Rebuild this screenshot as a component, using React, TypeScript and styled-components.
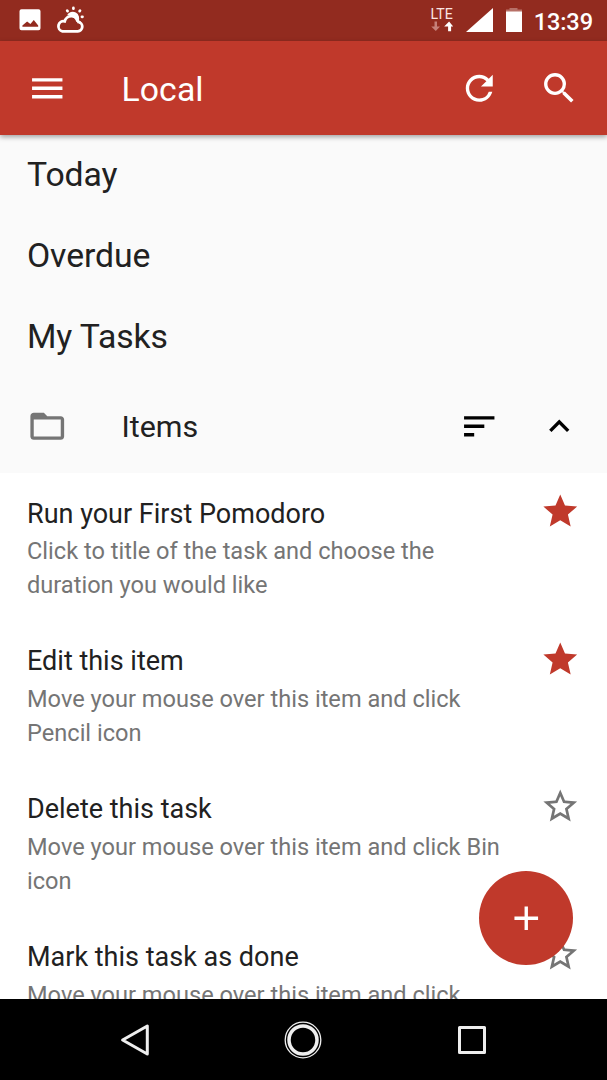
import React from 'react';
import styled, { createGlobalStyle } from 'styled-components';
import {
  MdAdd, MdExpandLess, MdFolderOpen, MdMenu, MdRefresh, MdSearch, MdSort, MdStar, MdStarBorder,
} from 'react-icons/md';

const RED = '#c0392b';
const INK = '#212121';
const GREY = '#757575';

const GlobalStyle = createGlobalStyle`
  *, *::before, *::after { box-sizing: border-box; }
  body { margin: 0; background: #000; font-family: Roboto, sans-serif; overflow: hidden; }
  h1, h2, h3, p, ul { margin: 0; padding: 0; font-weight: 400; list-style: none; }
  button { all: unset; box-sizing: border-box; }
  svg { display: block; flex: none; }
`;

const Screen = styled.div`
  position: relative;
  display: flex;
  flex-direction: column;
  width: 607px;
  height: 1080px;
  overflow: hidden;
  background: #fff;
`;

const StatusBar = styled.header`
  display: flex;
  align-items: center;
  justify-content: space-between;
  flex: none;
  height: 40.5px;
  padding: 0 14px 0 19px;
  background: #922b1f;
  color: #fff;
`;

const StatusGroup = styled.div<{ $gap: number }>`
  display: flex;
  align-items: center;
  gap: ${(p) => p.$gap}px;
`;

const Network = styled.div`
  display: flex;
  flex-direction: column;
  align-items: center;
  width: 25px;
  margin-top: -2px;
  font-size: 14.2px;
  line-height: 14px;
  color: #fbe5e2;
`;

const Clock = styled.time`
  font-size: 23.6px;
  font-weight: 500;
  line-height: 40px;
  padding-top: 3px;
  letter-spacing: -0.1px;
`;

const Toolbar = styled.div`
  z-index: 1;
  display: flex;
  align-items: center;
  flex: none;
  height: 94.5px;
  padding: 0.5px 27.5px 0 27px;
  background: ${RED};
  color: #fff;
  box-shadow: 0 2px 5px rgba(0, 0, 0, 0.36);
`;

const IconButton = styled.button<{ $ml?: number; $color?: string }>`
  display: flex;
  flex: none;
  width: 40.5px;
  height: 40.5px;
  margin-left: ${(p) => p.$ml ?? 0}px;
  color: ${(p) => p.$color ?? 'inherit'};
  svg { width: 100%; height: 100%; }
`;

const Title = styled.h1`
  flex: 1;
  margin: 4px 0 0 54px;
  font-size: 33.75px;
  line-height: 40px;
  letter-spacing: 0.1px;
`;

const Filters = styled.ul`
  flex: none;
  background: #fafafa;
  color: ${INK};
`;

const FilterRow = styled.li`
  height: 81px;
  padding-left: 27px;
  font-size: 33.75px;
  line-height: 80px;
  letter-spacing: -0.1px;
`;

const GroupRow = styled.div`
  display: flex;
  align-items: center;
  flex: none;
  height: 95px;
  padding: 2px 27.5px 0 27px;
  background: #fafafa;
  color: #000;
`;

const GroupName = styled.h2`
  flex: 1;
  margin-left: 54px;
  padding-top: 1px;
  color: ${INK};
  font-size: 30.4px;
  line-height: 40px;
`;

const TaskList = styled.ul`
  flex: 1;
  min-height: 0;
  overflow: hidden;
  background: #fff;
`;

const TaskRow = styled.li`
  display: flex;
  align-items: flex-start;
  height: 147.7px;
  padding: 18px 27px 0;
`;

const TaskText = styled.div`
  width: 486px;
  flex: none;
`;

const TaskTitle = styled.h3`
  padding-top: 5.7px;
  font-size: 27px;
  line-height: 34px;
  color: ${INK};
`;

const TaskNote = styled.p`
  margin-top: 4.8px;
  font-size: 23.6px;
  line-height: 33.75px;
  color: ${GREY};
`;

const Fab = styled.button`
  position: absolute;
  left: 478.8px;
  top: 870.5px;
  z-index: 2;
  display: flex;
  align-items: center;
  justify-content: center;
  width: 94.5px;
  height: 94.5px;
  border-radius: 50%;
  background: ${RED};
  color: #fff;
`;

const NavBar = styled.nav`
  display: grid;
  grid-template-columns: repeat(3, 168.5px);
  justify-content: center;
  justify-items: center;
  align-items: center;
  flex: none;
  height: 81px;
  padding-right: 1px;
  background: #000;
`;

const tasks = [
  { title: 'Run your First Pomodoro', note: 'Click to title of the task and choose the duration you would like', starred: true },
  { title: 'Edit this item', note: 'Move your mouse over this item and click Pencil icon', starred: true },
  { title: 'Delete this task', note: 'Move your mouse over this item and click Bin icon', starred: false },
  { title: 'Mark this task as done', note: 'Move your mouse over this item and click', starred: false },
];

const PictureIcon = () => (
  <svg width="22" height="22" viewBox="0 0 22 22">
    <path fill="#fff" fillRule="evenodd" d="M2.5.3h17a2 2 0 0 1 2 2v17a2 2 0 0 1-2 2h-17a2 2 0 0 1-2-2v-17a2 2 0 0 1 2-2zM3.4 17.8h15.8v-1.4l-4.4-5.4-3.4 4-3.3-2.6-4.7 4z" />
  </svg>
);

const WeatherIcon = () => (
  <svg width="29" height="28" viewBox="0 0 29 28" fill="none" stroke="#fff">
    <path strokeWidth="2.8" d="M6.4 25.3h15.4a4.7 4.7 0 0 0 .7-9.3 7.1 7.1 0 0 0-13.8-.7 5.1 5.1 0 0 0-2.3 10z" />
    <path fill="#fff" stroke="none" d="M11 9.2a6.2 6.2 0 1 1 11.4 6.2l-2 .6c-1-3.8-4.4-6.4-9.4-6.8z" />
    <path strokeWidth="2.7" strokeLinecap="round" d="M17.4 1.9v.8M11.2 4.6l.4.5M24 4.6l-.4.5M26.5 10.8h-.6M24 16.6l-.2-.2" />
  </svg>
);

const DataArrows = () => (
  <svg width="22" height="11" viewBox="0 0 22 11">
    <path fill="#c68079" d="M3.5.5h2.5v5h3L4.8 10 .2 5.5h3.3z" />
    <path fill="#fff" d="M17.1 10.2h3V5.5h2L18.1.5l-4.9 5h3.9z" />
  </svg>
);

export default function App() {
  return (
    <Screen>
      <GlobalStyle />
      <StatusBar>
        <StatusGroup $gap={15}>
          <PictureIcon />
          <WeatherIcon />
        </StatusGroup>
        <StatusGroup $gap={11.5}>
          <Network>
            LTE
            <DataArrows />
          </Network>
          <svg width="28" height="24" viewBox="0 0 28 24"><path fill="#fff" d="M27 0v24H0z" /></svg>
          <svg width="17" height="24" viewBox="0 0 17 24">
            <path fill="#b77067" d="M4.5 0h8v1.5H17V4H1V1.5h3.5z" />
            <path fill="#fff" d="M1 3.5h16V24H1z" />
          </svg>
          <Clock>13:39</Clock>
        </StatusGroup>
      </StatusBar>
      <Toolbar>
        <IconButton aria-label="Menu"><MdMenu /></IconButton>
        <Title>Local</Title>
        <IconButton aria-label="Refresh"><MdRefresh /></IconButton>
        <IconButton aria-label="Search" $ml={40}><MdSearch /></IconButton>
      </Toolbar>
      <Filters>
        <FilterRow>Today</FilterRow>
        <FilterRow>Overdue</FilterRow>
        <FilterRow>My Tasks</FilterRow>
      </Filters>
      <GroupRow>
        <IconButton as="span" $color={GREY}><MdFolderOpen /></IconButton>
        <GroupName>Items</GroupName>
        <IconButton aria-label="Sort"><MdSort /></IconButton>
        <IconButton aria-label="Collapse" $ml={40}><MdExpandLess /></IconButton>
      </GroupRow>
      <TaskList>
        {tasks.map((task) => (
          <TaskRow key={task.title}>
            <TaskText>
              <TaskTitle>{task.title}</TaskTitle>
              <TaskNote>{task.note}</TaskNote>
            </TaskText>
            <IconButton aria-label="Star" $ml={26.5} $color={task.starred ? RED : GREY}>
              {task.starred ? <MdStar /> : <MdStarBorder />}
            </IconButton>
          </TaskRow>
        ))}
      </TaskList>
      <Fab aria-label="Add task"><MdAdd size={40.5} /></Fab>
      <NavBar>
        <svg width="30" height="34" viewBox="0 0 30 34" fill="none" stroke="#eee" strokeWidth="3" strokeLinejoin="round">
          <path d="M27.3 3v28L2.6 17z" />
        </svg>
        <svg width="38" height="38" viewBox="0 0 38 38" fill="none" stroke="#eee">
          <circle cx="19" cy="19" r="17.8" strokeWidth="1.3" />
          <circle cx="19" cy="19" r="14" strokeWidth="3.5" />
        </svg>
        <svg width="30" height="30" viewBox="0 0 30 30" fill="none" stroke="#eee" strokeWidth="3" strokeLinejoin="round">
          <path d="M2.5 2.5h25v25h-25z" />
        </svg>
      </NavBar>
    </Screen>
  );
}
